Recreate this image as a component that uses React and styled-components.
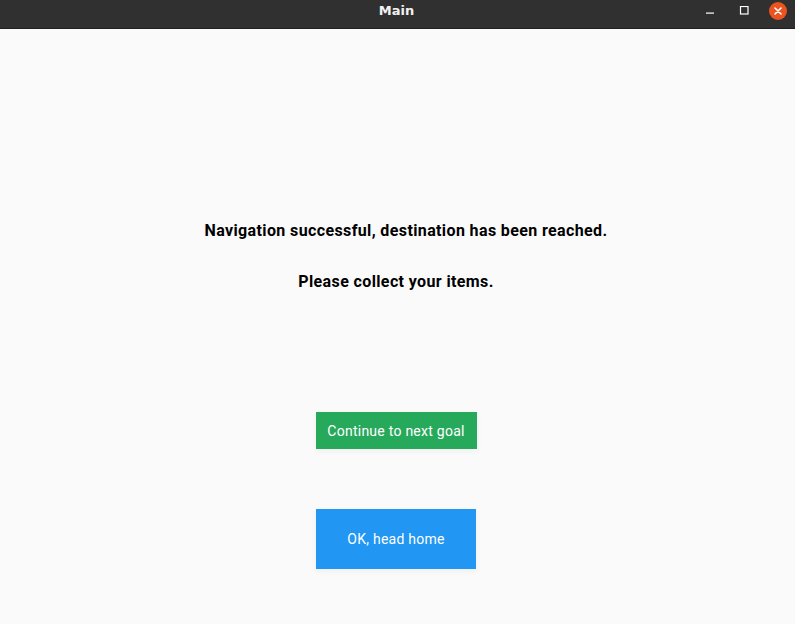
import styled, { createGlobalStyle } from "styled-components";

const Global = createGlobalStyle`
  html, body {
    margin: 0;
    padding: 0;
    background: #fafafa;
  }
`;

const Window = styled.div`
  width: 795px;
  height: 624px;
  display: flex;
  flex-direction: column;
  background: #fafafa;
  overflow: hidden;
`;

const TitleBar = styled.div`
  height: 29px;
  flex-shrink: 0;
  box-sizing: border-box;
  padding-top: 2px;
  background: #303030;
  border-bottom: 1px solid #1e1e1e;
  display: grid;
  grid-template-columns: 1fr auto 1fr;
  align-items: start;
`;

const Title = styled.div`
  grid-column: 2;
  height: 18px;
  line-height: 18px;
  color: #f2f2f2;
  font-family: "DejaVu Sans", sans-serif;
  font-weight: bold;
  font-size: 13px;
  margin-right: 2px;
`;

const Controls = styled.div`
  grid-column: 3;
  justify-self: end;
  display: flex;
  align-items: center;
`;

const Control = styled.button`
  width: 34px;
  height: 18px;
  border: 0;
  padding: 0;
  background: transparent;
  display: flex;
  align-items: center;
  justify-content: center;
`;

const Close = styled.span`
  width: 18px;
  height: 18px;
  border-radius: 50%;
  background: #e95420;
  display: flex;
  align-items: center;
  justify-content: center;
`;

const Content = styled.main`
  flex: 1;
  display: flex;
  flex-direction: column;
  align-items: center;
  padding-top: 192px;
  padding-right: 3px;
  font-family: Roboto, "Liberation Sans", sans-serif;
`;

const Message = styled.p`
  margin: 0 0 32px;
  padding-left: ${(p) => p.$shift || 0}px;
  font-size: 16px;
  font-weight: bold;
  line-height: 19px;
  letter-spacing: 0.38px;
  color: #000;
`;

const Actions = styled.div`
  margin-top: 89px;
  display: flex;
  flex-direction: column;
  align-items: center;
  gap: 60px;
`;

const Button = styled.button`
  width: ${(p) => p.$w}px;
  height: ${(p) => p.$h}px;
  background: ${(p) => p.$bg};
  color: #fff;
  border: 0;
  border-radius: 0;
  padding: 0;
  font-family: Roboto, "Liberation Sans", sans-serif;
  font-size: 14px;
  letter-spacing: 0.25px;
  box-shadow: 0 2px 6px rgba(0, 0, 0, 0.05);
  cursor: pointer;
`;

export default function App() {
  return (
    <>
      <Global />
      <Window>
        <TitleBar>
          <Title>Main</Title>
          <Controls>
            <Control aria-label="minimize">
              <svg width="10" height="10" viewBox="0 0 10 10">
                <rect x="1" y="6.5" width="8" height="1.2" fill="#fff" />
              </svg>
            </Control>
            <Control aria-label="maximize">
              <svg width="10" height="10" viewBox="0 0 10 10">
                <rect x="1.5" y="0.5" width="7.5" height="7.5" fill="none" stroke="#fff" strokeWidth="1.2" />
              </svg>
            </Control>
            <Control aria-label="close">
              <Close>
                <svg width="8" height="8" viewBox="0 0 8 8">
                  <path d="M1 1L7 7M7 1L1 7" stroke="#fff" strokeWidth="1.6" strokeLinecap="round" />
                </svg>
              </Close>
            </Control>
          </Controls>
        </TitleBar>
        <Content>
          <Message $shift={20}>Navigation successful, destination has been reached.</Message>
          <Message>Please collect your items.</Message>
          <Actions>
            <Button $w={161} $h={37} $bg="#27a95b">Continue to next goal</Button>
            <Button $w={160} $h={60} $bg="#2196f3">OK, head home</Button>
          </Actions>
        </Content>
      </Window>
    </>
  );
}
